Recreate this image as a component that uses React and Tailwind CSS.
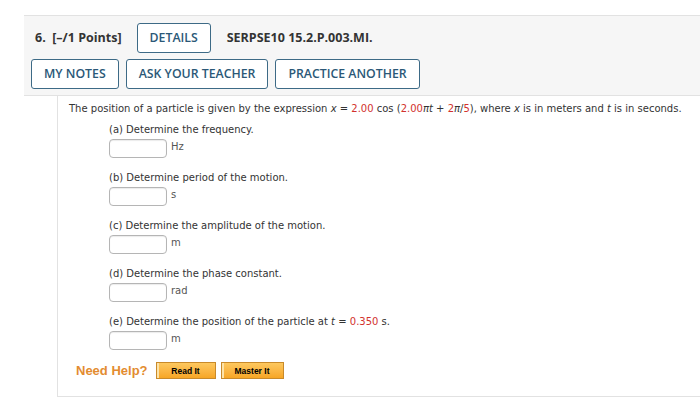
import React from 'react';

const parts = [
  { label: '(a) Determine the frequency.', unit: 'Hz' },
  { label: '(b) Determine period of the motion.', unit: 's' },
  { label: '(c) Determine the amplitude of the motion.', unit: 'm' },
  { label: '(d) Determine the phase constant.', unit: 'rad' },
  { label: 'e', unit: 'm' },
];

const HeaderButton = ({ children }) => (
  <button className="h-[30px] px-[12px] rounded-[3px] border-[1.5px] border-[#3d6a86] bg-white text-[12.3px] font-semibold text-[#2b5877] leading-none">
    {children}
  </button>
);

const HelpButton = ({ children, width }) => (
  <button
    className={`h-[17px] ${width} border border-[#c98a2a] bg-gradient-to-b from-[#fdc85e] to-[#f7a623] text-[8.5px] font-bold text-black leading-none shadow-[inset_2px_0_0_#fde3a8]`}
    style={{ fontFamily: '"Liberation Sans", Arial, sans-serif' }}
  >
    {children}
  </button>
);

const Red = ({ children }) => <span className="text-[#d2322d]">{children}</span>;

export default function App() {
  return (
    <div className="w-[700px] h-[407px] bg-white overflow-hidden pt-[15px]">
      <div
        className="ml-[24px] h-[81px] bg-[#f6f6f6] border-y border-[#e2e2e2] pl-[7px] pt-[7px] text-[#333]"
        style={{ fontFamily: '"Open Sans", sans-serif' }}
      >
        <div className="flex items-center h-[30px]">
          <span className="ml-[4px] text-[12.5px] font-bold">6.&nbsp; [–/1 Points]</span>
          <div className="ml-[15px]">
            <HeaderButton>DETAILS</HeaderButton>
          </div>
          <span className="ml-[16px] text-[12.5px] font-bold">SERPSE10 15.2.P.003.MI.</span>
        </div>
        <div className="flex gap-[7px] mt-[6px]">
          <HeaderButton>MY NOTES</HeaderButton>
          <HeaderButton>ASK YOUR TEACHER</HeaderButton>
          <HeaderButton>PRACTICE ANOTHER</HeaderButton>
        </div>
      </div>

      <div
        className="ml-[57px] h-[301px] border-l border-b border-[#e2e2e2] pl-[11px] pt-[6px] text-[10px] text-[#333]"
        style={{ fontFamily: '"DejaVu Sans", Verdana, sans-serif' }}
      >
        <p className="leading-[13px] whitespace-nowrap">
          The position of a particle is given by the expression <i>x</i> = <Red>2.00</Red> cos (<Red>2.00</Red><i>π</i><i>t</i> + <Red>2</Red><i>π</i>/<Red>5</Red>), where <i>x</i> is in meters and <i>t</i> is in seconds.
        </p>
        <div className="ml-[40px]">
          {parts.map((p, i) => (
            <div key={i} className="mt-[8px] h-[40px]">
              <div className="leading-[13px]">
                {p.label === 'e' ? (
                  <>(e) Determine the position of the particle at <i>t</i> = <Red>0.350</Red> s.</>
                ) : (
                  p.label
                )}
              </div>
              <div className="flex items-start mt-[3px]">
                <div className="w-[58px] h-[19px] rounded-[4px] border border-[#b5b5b5] bg-white shadow-[inset_0_1px_1px_rgba(0,0,0,0.08)]" />
                <span className="ml-[4px] mt-[3px] text-[#555] leading-none">{p.unit}</span>
              </div>
            </div>
          ))}
        </div>
        <div className="flex items-center mt-[6px] ml-[7px]">
          <span
            className="text-[13px] font-bold text-[#e38c30]"
            style={{ fontFamily: '"Liberation Sans", Arial, sans-serif' }}
          >
            Need Help?
          </span>
          <div className="flex gap-[5px] ml-[8px]">
            <HelpButton width="w-[60px]">Read It</HelpButton>
            <HelpButton width="w-[63px]">Master It</HelpButton>
          </div>
        </div>
      </div>
    </div>
  );
}
